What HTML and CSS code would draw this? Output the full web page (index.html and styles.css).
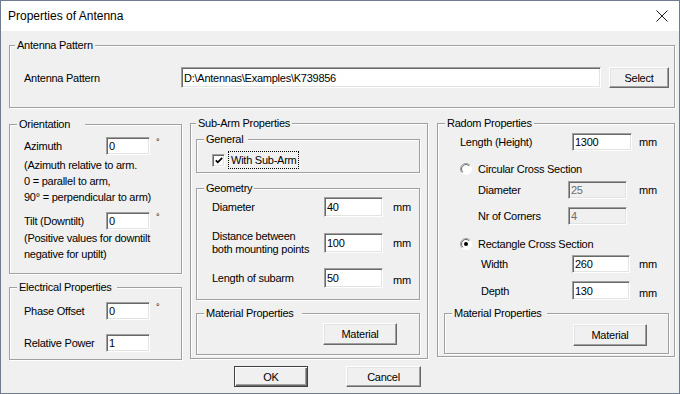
FILE: index.html
```html
<!DOCTYPE html>
<html>
<head>
<meta charset="utf-8">
<title>Properties of Antenna</title>
<link rel="stylesheet" href="styles.css">
</head>
<body>
<div class="dialog">
    <div class="titlebar">
        <span class="title">Properties of Antenna</span>
        <svg class="close" width="12" height="12" viewBox="0 0 12 12"><path d="M0.5 0.5 L11.5 11.5 M11.5 0.5 L0.5 11.5" stroke="#1b1b1b" stroke-width="1" fill="none"/></svg>
    </div>

    <div class="client">
        <fieldset class="group pattern">
            <legend class="tight">Antenna Pattern</legend>
            <div class="row pattern-row">
                <label class="lbl">Antenna Pattern</label>
                <input class="edit" type="text" value="D:\Antennas\Examples\K739856">
                <button class="btn select">Select</button>
            </div>
        </fieldset>

        <div class="columns">
            <div class="col1">
                <fieldset class="group orientation">
                    <legend class="gap-wide">Orientation</legend>
                    <div class="row">
                        <label class="lbl">Azimuth</label>
                        <input class="edit" type="text" value="0">
                        <span class="deg">&deg;</span>
                    </div>
                    <div class="note first">(Azimuth relative to arm.<br>0 = parallel to arm,<br>90&deg; = perpendicular to arm)</div>
                    <div class="row tilt">
                        <label class="lbl">Tilt (Downtilt)</label>
                        <input class="edit" type="text" value="0">
                        <span class="deg">&deg;</span>
                    </div>
                    <div class="note">(Positive values for downtilt<br>negative for uptilt)</div>
                </fieldset>

                <fieldset class="group electrical">
                    <legend class="gap-small">Electrical Properties</legend>
                    <div class="row">
                        <label class="lbl">Phase Offset</label>
                        <input class="edit" type="text" value="0">
                        <span class="deg">&deg;</span>
                    </div>
                    <div class="row power">
                        <label class="lbl">Relative Power</label>
                        <input class="edit" type="text" value="1">
                    </div>
                </fieldset>
            </div>

            <fieldset class="group subarm">
                <legend class="tight">Sub-Arm Properties</legend>

                <fieldset class="group general">
                    <legend class="gap-small">General</legend>
                    <div class="row checkrow">
                        <span class="check"><svg width="8" height="7" viewBox="0 0 8 7"><polyline points="0.8,3.3 2.8,5.4 7.2,0.9" fill="none" stroke="#000" stroke-width="1.7"/></svg></span>
                        <label class="focus">With Sub-Arm</label>
                    </div>
                </fieldset>

                <fieldset class="group geometry">
                    <legend>Geometry</legend>
                    <div class="row">
                        <label class="lbl">Diameter</label>
                        <input class="edit" type="text" value="40">
                        <span class="unit">mm</span>
                    </div>
                    <div class="row distance">
                        <label class="lbl">Distance between<br>both mounting points</label>
                        <input class="edit" type="text" value="100">
                        <span class="unit">mm</span>
                    </div>
                    <div class="row length">
                        <label class="lbl">Length of subarm</label>
                        <input class="edit" type="text" value="50">
                        <span class="unit low">mm</span>
                    </div>
                </fieldset>

                <fieldset class="group material">
                    <legend class="gap-mat">Material Properties</legend>
                    <button class="btn">Material</button>
                </fieldset>
            </fieldset>

            <fieldset class="group radom">
                <legend>Radom Properties</legend>
                <div class="row r-length">
                    <label class="lbl">Length (Height)</label>
                    <input class="edit" type="text" value="1300">
                    <span class="unit">mm</span>
                </div>
                <div class="row radiorow r-circ">
                    <svg class="radio" width="12" height="12" viewBox="0 0 12 12">
                        <circle cx="6" cy="6" r="5.5" fill="#fff" stroke="#fff"/>
                        <path d="M2.1 9.9 A5.5 5.5 0 0 1 9.9 2.1" fill="none" stroke="#a0a0a0"/>
                        <path d="M2.8 9.2 A4.5 4.5 0 0 1 9.2 2.8" fill="none" stroke="#696969"/>
                    </svg>
                    <label>Circular Cross Section</label>
                </div>
                <div class="row r-sub r-diam">
                    <label class="lbl">Diameter</label>
                    <input class="edit" type="text" value="25" disabled>
                    <span class="unit">mm</span>
                </div>
                <div class="row r-sub r-corners">
                    <label class="lbl">Nr of Corners</label>
                    <input class="edit" type="text" value="4" disabled>
                </div>
                <div class="row radiorow r-rect">
                    <svg class="radio" width="12" height="12" viewBox="0 0 12 12">
                        <circle cx="6" cy="6" r="5.5" fill="#fff" stroke="#fff"/>
                        <path d="M2.1 9.9 A5.5 5.5 0 0 1 9.9 2.1" fill="none" stroke="#a0a0a0"/>
                        <path d="M2.8 9.2 A4.5 4.5 0 0 1 9.2 2.8" fill="none" stroke="#696969"/>
                        <circle cx="6" cy="6" r="2" fill="#000"/>
                    </svg>
                    <label>Rectangle Cross Section</label>
                </div>
                <div class="row r-box r-width">
                    <label class="lbl">Width</label>
                    <input class="edit" type="text" value="260">
                    <span class="unit">mm</span>
                </div>
                <div class="row r-box r-depth">
                    <label class="lbl">Depth</label>
                    <input class="edit" type="text" value="130">
                    <span class="unit low">mm</span>
                </div>

                <fieldset class="group material radom-mat">
                    <legend class="gap-small">Material Properties</legend>
                    <button class="btn">Material</button>
                </fieldset>
            </fieldset>
        </div>

        <div class="actions">
            <button class="btn default">OK</button>
            <button class="btn cancel">Cancel</button>
        </div>
    </div>
</div>
</body>
</html>
```

FILE: styles.css
```css
* {
    box-sizing: border-box;
}

body {
    margin: 0;
    background: #fff;
    font-family: "Liberation Sans", Arial, sans-serif;
    font-size: 11px;
    letter-spacing: -0.25px;
    color: #000;
}

.dialog {
    width: 680px;
    height: 394px;
    border: 1px solid #6f7b8f;
    background: #f0f0f0;
    display: flex;
    flex-direction: column;
}

.titlebar {
    height: 30px;
    flex: none;
    background: #fff;
    display: flex;
    align-items: center;
    justify-content: space-between;
    padding: 0 11px 0 7px;
}

.title {
    font-size: 12px;
    letter-spacing: 0;
    color: #000;
}

.client {
    flex: 1;
    padding: 8px 4px 0 8px;
}

/* group boxes */
.group {
    margin: 0;
    padding: 0;
    min-width: 0;
    border: 1px solid #a0a0a0;
    box-shadow: inset 1px 1px 0 #fff, 1px 1px 0 #fff;
}

.group legend {
    margin-left: 7px;
    padding: 0 2px;
    height: 13px;
    line-height: 13px;
    background: #f0f0f0;
}

.group legend.tight {
    margin-left: 5px;
}

.group legend.gap-wide {
    padding-right: 15px;
}

.group legend.gap-small {
    padding-right: 5px;
}

.group legend.gap-mat {
    padding-right: 8px;
}

.row {
    display: flex;
    align-items: center;
}

.lbl {
    flex: none;
    white-space: nowrap;
}

/* sunken edit */
.edit {
    flex: none;
    height: 18px;
    padding: 0 2px;
    font: inherit;
    letter-spacing: inherit;
    color: #000;
    background: #fff;
    border: 1px solid;
    border-color: #a0a0a0 #fff #fff #a0a0a0;
    box-shadow: inset 1px 1px 0 #696969, inset -1px -1px 0 #e3e3e3;
    outline: none;
}

.edit:disabled {
    background: #f0f0f0;
    color: #6d6d6d;
}

/* raised button */
.btn {
    flex: none;
    height: 22px;
    padding: 0;
    font: inherit;
    letter-spacing: inherit;
    color: #000;
    background: #f0f0f0;
    border: 1px solid;
    border-color: #fff #696969 #696969 #fff;
    box-shadow: inset -1px -1px 0 #a0a0a0, inset 1px 1px 0 #e3e3e3;
}

.btn.default {
    border-color: #404040;
    box-shadow: inset 1px 1px 0 #fff, inset -1px -1px 0 #696969, inset -2px -2px 0 #a0a0a0;
}

.deg {
    align-self: flex-start;
    margin-left: 6px;
    font-size: 9px;
    line-height: 9px;
    margin-top: 1px;
}

.unit {
    margin-left: 10px;
}

.unit.low {
    padding-top: 6px;
}

/* antenna pattern */
.pattern {
    padding: 15px 0 19px;
}

.pattern-row {
    height: 21px;
    margin-left: 14px;
}

.pattern-row .lbl {
    width: 157px;
}

.pattern-row .edit {
    width: 420px;
    height: 21px;
}

.select {
    width: 60px;
    height: 21px;
    margin-left: 8px;
}

/* three columns */
.columns {
    display: flex;
    align-items: flex-start;
    margin-top: 9px;
}

.col1 {
    width: 173px;
    margin-top: 1px;
    display: flex;
    flex-direction: column;
}

.orientation {
    padding: 6px 0 11px;
}

.orientation .row,
.electrical .row {
    height: 18px;
    margin-left: 14px;
}

.orientation .lbl,
.electrical .lbl {
    width: 82px;
}

.orientation .edit,
.electrical .edit {
    width: 44px;
}

.note {
    margin-left: 14px;
    line-height: 16px;
    white-space: nowrap;
}

.note.first {
    margin-top: 2px;
}

.orientation .tilt {
    margin-top: 7px;
}

.electrical {
    margin-top: 7px;
    padding: 8px 0 7px;
}

.electrical .power {
    margin-top: 14px;
}

/* sub-arm */
.subarm {
    width: 238px;
    margin-left: 8px;
    padding: 0 7px 3px 0;
}

.subarm > .group {
    margin-left: 5px;
}

.general {
    margin-top: 3px;
    padding: 5px 0 3px;
}

.checkrow {
    height: 18px;
    margin-left: 15px;
}

.check {
    width: 13px;
    height: 13px;
    display: flex;
    align-items: center;
    justify-content: center;
    background: #fff;
    border: 1px solid;
    border-color: #a0a0a0 #fff #fff #a0a0a0;
    box-shadow: inset 1px 1px 0 #696969, inset -1px -1px 0 #e3e3e3;
}

.focus {
    margin-left: 3px;
    height: 18px;
    line-height: 16px;
    padding: 0 2px;
    border: 1px dotted #000;
}

.geometry {
    margin-top: 9px;
    padding: 2px 0 11px;
}

.geometry .row {
    height: 20px;
    margin-left: 15px;
}

.geometry .lbl {
    width: 112px;
    line-height: 13px;
}

.geometry .edit {
    width: 59px;
    height: 20px;
}

.geometry .distance {
    height: 26px;
    margin-top: 13px;
}

.geometry .length {
    margin-top: 12px;
}

.material {
    margin-top: 7px;
    padding: 3px 0 9px;
}

.material .btn {
    width: 74px;
    margin-left: 126px;
}

/* radom */
.radom {
    width: 238px;
    margin-left: 9px;
    padding: 3px 0 2px;
}

.radom .lbl {
    width: 112px;
}

.radom .r-length {
    height: 18px;
    padding-left: 22px;
}

.radom .r-length .edit {
    width: 60px;
}

.radom .r-length .unit {
    margin-left: 7px;
}

.radiorow {
    height: 16px;
    padding-left: 22px;
}

.radio {
    flex: none;
    margin-right: 6px;
}

.r-circ {
    margin-top: 10px;
}

.r-sub {
    height: 18px;
    padding-left: 40px;
}

.radom .r-sub .lbl {
    width: 90px;
}

.r-sub .edit {
    width: 59px;
}

.r-sub .unit {
    margin-left: 12px;
}

.r-diam {
    margin-top: 4px;
}

.r-corners {
    margin-top: 8px;
}

.r-rect {
    margin-top: 11px;
}

.r-box {
    height: 18px;
    padding-left: 43px;
}

.radom .r-box .lbl {
    width: 91px;
}

.r-box .edit {
    width: 58px;
}

.r-box .unit {
    margin-left: 9px;
}

.r-width {
    margin-top: 3px;
}

.r-depth {
    margin-top: 8px;
    height: 19px;
}

.r-depth .edit {
    height: 19px;
}

.unit.low {
    padding-top: 4px;
}

.radom-mat {
    margin: 7px 5px 0 6px;
    padding: 4px 0 7px;
}

.radom-mat .btn {
    margin-left: 128px;
}

/* OK / Cancel */
.actions {
    display: flex;
    margin-top: 6px;
    padding-left: 225px;
}

.actions .btn {
    height: 21px;
}

.default {
    width: 74px;
}

.cancel {
    width: 75px;
    margin-left: 38px;
}
```
